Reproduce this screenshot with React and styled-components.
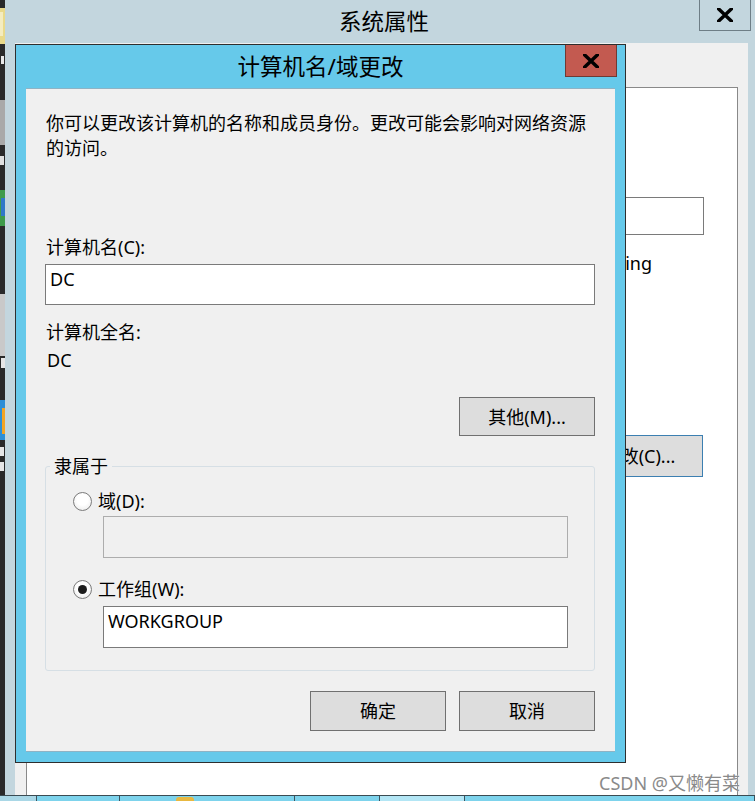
import React from 'react'
import styled, { createGlobalStyle } from 'styled-components'

//Bold window close "x", flat ends come from the svg clip
const CloseGlyph = () => (
  <svg width="16" height="14" viewBox="0 0 16 14">
    <path d="M0.2 -0.5 L15.8 14.5 M15.8 -0.5 L0.2 14.5" stroke="#000" strokeWidth="3.4" fill="none" />
  </svg>
)

//Pieces of desktop icons peeking out on the left edge
const DesktopIcons = () => (
  <IconStrip width="5" height="801" viewBox="0 0 5 801">
    <rect x="0" y="8" width="5" height="36" fill="#e9d98a" />
    <rect x="0" y="12" width="3" height="24" fill="#f4ecc0" />
    <rect x="1" y="56" width="3" height="8" fill="#e8e8e8" />
    <rect x="0" y="100" width="5" height="45" fill="#a9a9a9" />
    <rect x="0" y="156" width="4" height="9" fill="#e0e0e0" />
    <rect x="0" y="190" width="5" height="36" fill="#3d9b4b" />
    <rect x="1" y="198" width="4" height="18" fill="#2f78c8" />
    <rect x="0" y="294" width="5" height="62" fill="#c9c9c9" />
    <rect x="1" y="358" width="4" height="10" fill="#e6e6e6" />
    <rect x="0" y="400" width="5" height="40" fill="#2d8fd6" />
    <rect x="2" y="408" width="3" height="26" fill="#f2a424" />
    <rect x="0" y="447" width="4" height="9" fill="#e6e6e6" />
    <rect x="0" y="462" width="4" height="9" fill="#e6e6e6" />
  </IconStrip>
)

//Radio button with a label
const Radio = ({ checked, children }) => (
  <RadioRow>
    <RadioDot $checked={checked} />
    <span>{children}</span>
  </RadioRow>
)

const App = () => {
  return <Desktop>
    <GlobalStyle />
    <DesktopIcons />

    {/* System properties window behind */}
    <ParentWindow>
      <ParentTitleBar>
        <span />
        <ParentTitle>系统属性</ParentTitle>
        <ParentClose><CloseGlyph /></ParentClose>
      </ParentTitleBar>
      <ParentClient>
        <TabPage>
          <DescInput />
          <HintText>例如: "IIS Production Server" 或 "Accounting</HintText>
          <ChangeButton>更改(C)...</ChangeButton>
        </TabPage>
      </ParentClient>
    </ParentWindow>

    {/* Computer name / domain change dialog */}
    <Dialog>
      <DialogTitleBar>
        <span />
        <DialogTitle>计算机名/域更改</DialogTitle>
        <DialogClose><CloseGlyph /></DialogClose>
      </DialogTitleBar>
      <DialogClient>
        <Desc>你可以更改该计算机的名称和成员身份。更改可能会影响对网络资源的访问。</Desc>
        <Label $top={75}>计算机名(C):</Label>
        <TextBox $top={5}>DC</TextBox>
        <Label $top={15}>计算机全名:</Label>
        <Value>DC</Value>
        <OtherButton>其他(M)...</OtherButton>

        <Group>
          <Legend>隶属于</Legend>
          <GroupBody>
            <Radio>域(D):</Radio>
            <TextBox $top={3} $indent $disabled />
            <Radio checked>工作组(W):</Radio>
            <TextBox $top={5} $indent>WORKGROUP</TextBox>
          </GroupBody>
        </Group>

        <ButtonRow>
          <Button>确定</Button>
          <Button>取消</Button>
        </ButtonRow>
      </DialogClient>
    </Dialog>

    <Watermark>CSDN @又懒有菜</Watermark>

    <Taskbar>
      <TaskCell $w={37} $light />
      <TaskCell $w={83} />
      <TaskCell $w={175}><TaskIcon /></TaskCell>
      <TaskCell $w={85} />
      <TaskCell $w={85} $active />
      <TaskCell />
    </Taskbar>
  </Desktop>
}

//Component style
const GlobalStyle = createGlobalStyle`
  html, body {
    margin: 0;
    padding: 0;
  }
  body {
    width: 755px;
    height: 801px;
    overflow: hidden;
    font-family: "Noto Sans", "Noto Sans CJK SC", sans-serif;
    font-size: 18px;
    color: #000;
  }
  * { box-sizing: border-box; }
`

const Desktop = styled.div`
  position: relative;
  width: 755px;
  height: 801px;
  overflow: hidden;
  background: #2a2a2a;
  display: grid;
  grid-template-rows: 1fr 6px;
`

const IconStrip = styled.svg`
  position: absolute;
  left: 0;
  top: 0;
`

const ParentWindow = styled.div`
  position: absolute;
  left: 5px;
  top: -1px;
  width: 758px;
  height: 797px;
  padding: 0 10px;
  background: #c3d6de;
  display: flex;
  flex-direction: column;
`

const ParentTitleBar = styled.div`
  height: 44px;
  display: grid;
  grid-template-columns: 1fr auto 1fr;
  align-items: start;
`

const ParentTitle = styled.div`
  font-size: 22.5px;
  line-height: 44px;
  padding-top: 1px;
`

const ParentClose = styled.div`
  justify-self: end;
  margin-right: 2px;
  width: 52px;
  height: 32px;
  border: 1px solid #6e7e86;
  border-top: none;
  display: grid;
  place-items: center;
  padding-top: 1px;
`

const ParentClient = styled.div`
  flex: 1;
  margin-right: 5px;
  background: #f0f0f0;
  padding: 44px 10px 0 11px;
  display: flex;
`

const TabPage = styled.div`
  flex: 1;
  background: #fff;
  border: 1px solid #898989;
  border-bottom: none;
  display: flex;
  flex-direction: column;
  align-items: flex-end;
`

const DescInput = styled.div`
  margin: 109px 33px 0 0;
  width: 400px;
  height: 38px;
  border: 1px solid #7a7a7a;
`

const HintText = styled.div`
  margin: 16px 85px 0 0;
  line-height: 24px;
  white-space: nowrap;
`

const ChangeButton = styled.div`
  margin: 160px 34px 0 0;
  width: 128px;
  height: 42px;
  border: 1px solid #3c7fb1;
  background: #dddddd;
  display: grid;
  place-items: center;
  line-height: 24px;
`

const Dialog = styled.div`
  position: absolute;
  left: 15px;
  top: 44px;
  width: 611px;
  height: 719px;
  border: 1px solid #2e2e2e;
  background: #66c9ea;
  padding: 0 10px 10px;
  display: flex;
  flex-direction: column;
`

const DialogTitleBar = styled.div`
  margin: 0 -10px;
  height: 43px;
  display: grid;
  grid-template-columns: 1fr auto 1fr;
  align-items: start;
`

const DialogTitle = styled.div`
  font-size: 22.5px;
  line-height: 43px;
`

const DialogClose = styled.div`
  justify-self: end;
  margin-right: 8px;
  width: 52px;
  height: 32px;
  background: #c35a50;
  border: 1px solid #6f3a34;
  border-top: none;
  display: grid;
  place-items: center;
`

const DialogClient = styled.div`
  flex: 1;
  background: #f0f0f0;
  border-top: 1px solid #8fb3c4;
  border-bottom: 1px solid #8fb3c4;
  padding: 22px 20px 0 19px;
  display: flex;
  flex-direction: column;
`

const Desc = styled.p`
  margin: 0;
  padding-left: 1px;
  line-height: 24.5px;
`

const Label = styled.div`
  margin-top: ${p => p.$top}px;
  padding-left: 1px;
  line-height: 24px;
`

const Value = styled.div`
  margin-top: 4px;
  padding-left: 2px;
  line-height: 24px;
`

const TextBox = styled.div`
  margin-top: ${p => p.$top}px;
  margin-left: ${p => (p.$indent ? 30 : 0)}px;
  height: ${p => (p.$indent ? 42 : 41)}px;
  border: 1px solid ${p => (p.$disabled ? '#adadad' : '#7a7a7a')};
  background: ${p => (p.$disabled ? '#f0f0f0' : '#fff')};
  padding: 2px 4px;
  line-height: 24px;
`

const Button = styled.div`
  width: 136px;
  height: 40px;
  border: 1px solid #707070;
  background: #dddddd;
  display: grid;
  place-items: center;
  line-height: 24px;
`

const OtherButton = styled(Button)`
  align-self: flex-end;
  margin-top: 25px;
  height: 39px;
`

const Group = styled.fieldset`
  margin: 18px 0 0;
  padding: 0 0 22px;
  min-width: 0;
  border: 1px solid #d6dfe5;
  border-radius: 3px;
`

const Legend = styled.legend`
  margin-left: 4px;
  padding: 0 4px;
  line-height: 24px;
`

const GroupBody = styled.div`
  padding: 11px 26px 0 27px;
  display: flex;
  flex-direction: column;
  & > :nth-child(3) { margin-top: 19px; }
`

const RadioRow = styled.div`
  display: flex;
  align-items: center;
  gap: 6px;
  line-height: 24px;
`

const RadioDot = styled.span`
  width: 19px;
  height: 19px;
  border-radius: 50%;
  border: 1px solid #7b7b7b;
  background: radial-gradient(circle at 50% 40%, #ffffff 40%, #e6e6e6);
  display: grid;
  place-items: center;
  &::after {
    content: '';
    width: 9px;
    height: 9px;
    border-radius: 50%;
    background: ${p => (p.$checked ? '#1c1c1c' : 'transparent')};
  }
`

const ButtonRow = styled.div`
  margin-top: 20px;
  display: flex;
  justify-content: flex-end;
  gap: 13px;
`

const Watermark = styled.div`
  position: absolute;
  right: 15px;
  top: 771px;
  font-size: 18px;
  line-height: 24px;
  color: #8a8a8a;
  text-shadow: 0 0 1px #fff;
`

const Taskbar = styled.div`
  grid-row: 2;
  z-index: 1;
  display: flex;
  border-top: 1px solid #3b4b52;
  background: #7dd3ec;
`

const TaskCell = styled.div`
  position: relative;
  flex: ${p => (p.$w ? `0 0 ${p.$w}px` : '1')};
  border-right: 1px solid #3a5560;
  background: ${p => (p.$active ? '#b3e6f5' : p.$light ? '#a9d7e6' : 'transparent')};
`

const TaskIcon = styled.span`
  position: absolute;
  left: 56px;
  top: 1px;
  width: 18px;
  height: 5px;
  border-radius: 3px 3px 0 0;
  background: #e8b840;
`

export default App
